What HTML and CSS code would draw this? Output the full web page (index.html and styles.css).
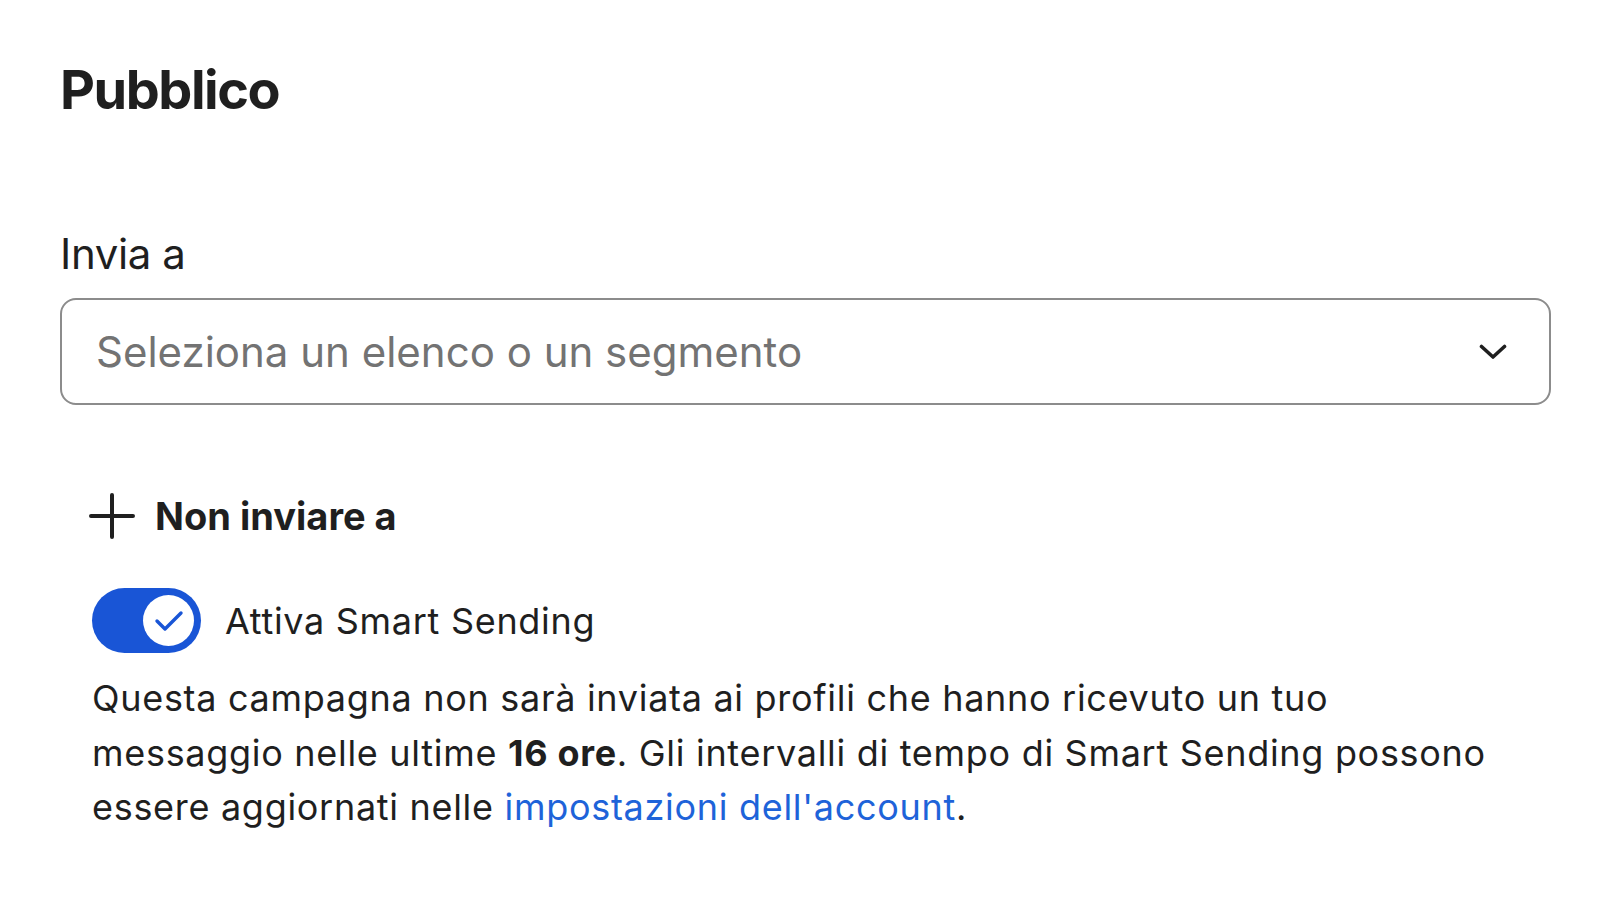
FILE: index.html
```html
<!DOCTYPE html>
<html lang="it">
<head>
<meta charset="utf-8">
<title>Pubblico</title>
<link rel="stylesheet" href="styles.css">
</head>
<body>
<main class="panel">
  <h1 class="title">Pubblico</h1>
  <div class="field">
    <label class="field-label">Invia a</label>
    <div class="select">
      <span class="placeholder">Seleziona un elenco o un segmento</span>
      <svg class="chevron" width="28" height="16" viewBox="0 0 28 16" aria-hidden="true">
        <path d="M2.5 2.5 L14 13 L25.5 2.5" fill="none" stroke="#1f1f1f" stroke-width="3.6" stroke-linecap="round" stroke-linejoin="round"/>
      </svg>
    </div>
  </div>
  <div class="options">
    <div class="exclude">
      <svg class="plus" width="46" height="46" viewBox="0 0 46 46" aria-hidden="true">
        <path d="M23 2 V44 M2 23 H44" fill="none" stroke="#1f1f1f" stroke-width="4" stroke-linecap="round"/>
      </svg>
      <span class="exclude-text">Non inviare a</span>
    </div>
    <div class="toggle-row">
      <span class="switch">
        <span class="knob">
          <svg width="30" height="22" viewBox="0 0 30 22" aria-hidden="true">
            <path d="M3 11 L11 19 L27 3" fill="none" stroke="#1955d6" stroke-width="3.4" stroke-linecap="round" stroke-linejoin="round"/>
          </svg>
        </span>
      </span>
      <span class="toggle-label">Attiva Smart Sending</span>
    </div>
    <p class="help">Questa campagna non sarà inviata ai profili che hanno ricevuto un tuo messaggio nelle ultime <strong>16 ore</strong>. Gli intervalli di tempo di Smart Sending possono essere aggiornati nelle <a class="link" href="#">impostazioni dell'account</a>.</p>
  </div>
</main>
</body>
</html>
```
FILE: styles.css
```css
html, body {
  margin: 0;
  padding: 0;
  background: #ffffff;
}
body {
  font-family: Inter, "Noto Sans", "Liberation Sans", sans-serif;
  color: #1f1f1f;
}
.panel {
  padding: 56px 49px 0 60px;
}
.title {
  margin: 0;
  font-size: 54px;
  line-height: 67px;
  font-weight: 700;
  letter-spacing: -1.45px;
}
.field {
  margin-top: 105px;
}
.field-label {
  display: block;
  font-size: 42px;
  line-height: 52px;
  font-weight: 400;
  letter-spacing: -0.4px;
}
.select {
  margin-top: 18px;
  height: 103px;
  border: 2px solid #8c8c8c;
  border-radius: 16px;
  display: flex;
  align-items: center;
  justify-content: space-between;
  padding: 0 42px 0 34px;
}
.placeholder {
  font-size: 42px;
  color: #737373;
  letter-spacing: 0;
}
.chevron {
  display: block;
}
.options {
  padding-left: 29px;
  margin-top: 85px;
}
.exclude {
  display: flex;
  align-items: center;
  gap: 20px;
}
.plus {
  display: block;
}
.exclude-text {
  font-size: 38px;
  font-weight: 700;
  line-height: 52px;
  letter-spacing: 0;
}
.toggle-row {
  margin-top: 46px;
  display: flex;
  align-items: center;
  gap: 24px;
  padding-left: 3px;
}
.switch {
  width: 109px;
  height: 65px;
  border-radius: 33px;
  background: #1955d6;
  display: flex;
  align-items: center;
  justify-content: flex-end;
  padding-right: 7px;
  box-sizing: border-box;
}
.knob {
  width: 51px;
  height: 51px;
  border-radius: 50%;
  background: #ffffff;
  display: flex;
  align-items: center;
  justify-content: center;
}
.knob svg {
  display: block;
}
.toggle-label {
  font-size: 36px;
  line-height: 46px;
  letter-spacing: 0.7px;
}
.help {
  margin: 18px 0 0 0;
  padding-left: 3px;
  font-size: 36px;
  line-height: 54.5px;
  letter-spacing: 0.7px;
  max-width: 1415px;
}
.help strong {
  font-weight: 700;
}
.link {
  color: #1e63d9;
  text-decoration: none;
}
```
